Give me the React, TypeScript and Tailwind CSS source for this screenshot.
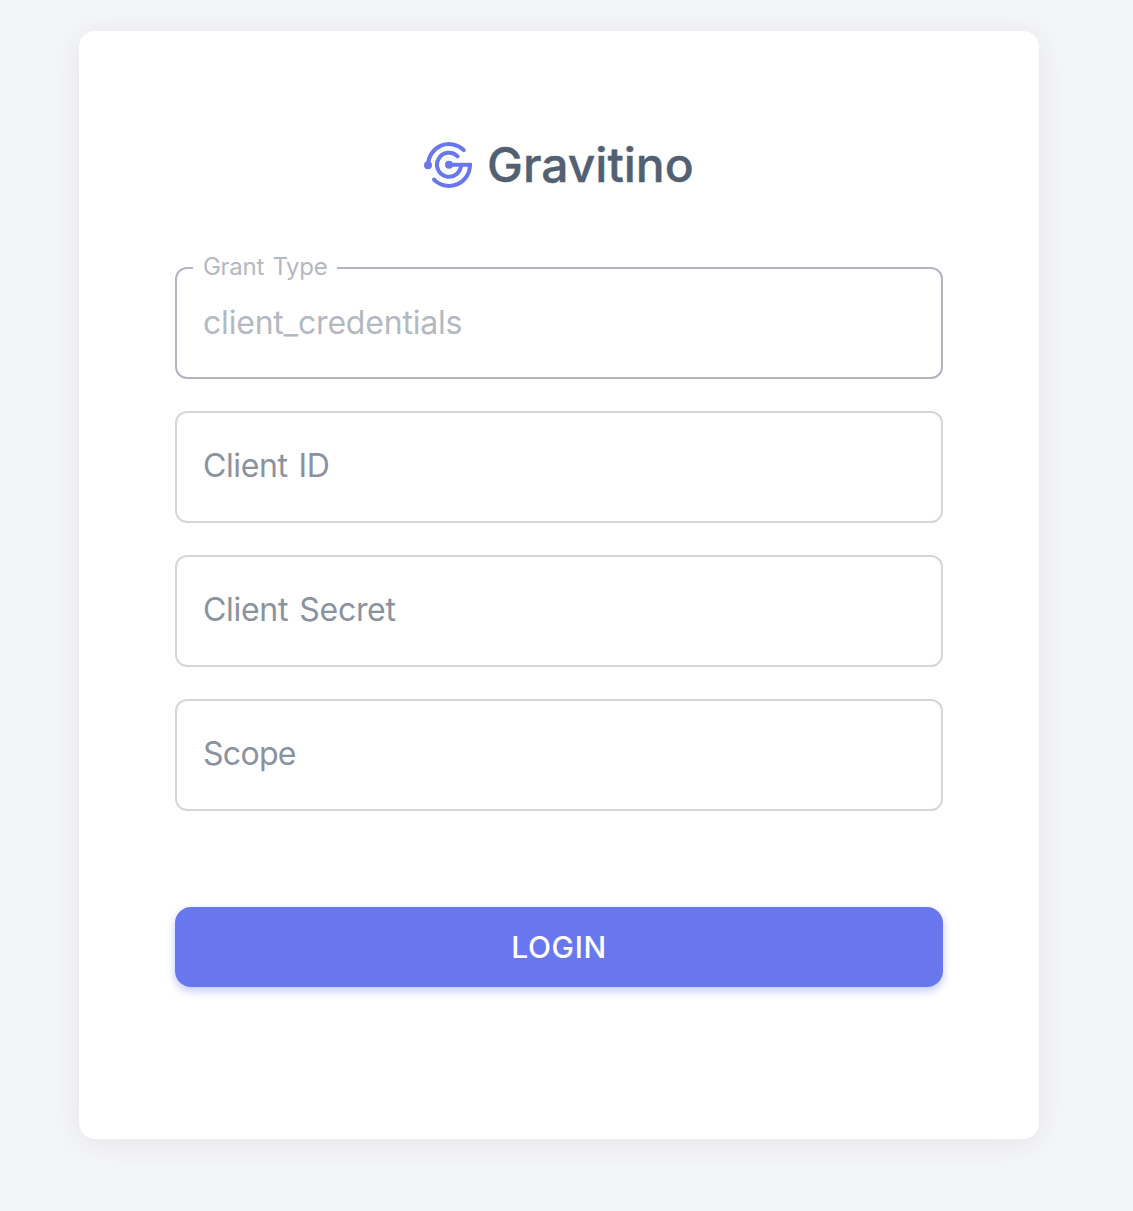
function Logo() {
  return (
    <svg width="48" height="48" viewBox="0 0 48 48" fill="none" stroke="#6877ee" strokeWidth="4" strokeLinecap="round">
      <path d="M39.8 9.2A21 21 0 0 0 4 23.8" />
      <path d="M10 38.6A21 21 0 0 0 46 23.8" strokeLinecap="butt" />
      <path d="M10 38.6h.01" />
      <path d="M33.6 15.4A12 12 0 1 0 37 23.8" />
      <path d="M25 23.8H48" strokeLinecap="butt" />
      <circle cx="25" cy="23.8" r="4" fill="#6877ee" stroke="none" />
      <circle cx="4" cy="24.2" r="4" fill="#6877ee" stroke="none" />
    </svg>
  );
}

function Field({ label, spacing }: { label: string; spacing: string }) {
  return (
    <div className="flex h-28 items-center rounded-xl border-2 border-[#d3d6db] px-[26px] pb-[2px] text-[32px] leading-none text-[#8b929f]">
      <span className={spacing}>{label}</span>
    </div>
  );
}

export default function App() {
  return (
    <main className="h-[1211px] overflow-hidden bg-[#f4f5f7] pl-[79px] pt-[31px] font-['Inter',sans-serif] font-normal">
      <section className="flex h-[1108px] w-[960px] flex-col rounded-2xl bg-white px-24 pt-[110px] shadow-[0_4px_28px_rgba(58,53,90,0.08)]">
        <header className="flex h-12 items-center justify-center gap-[15px]">
          <Logo />
          <h1 className="w-[207px] text-[48px] leading-none font-medium text-[#516072] [-webkit-text-stroke:0.4px_#516072]">
            Gravitino
          </h1>
        </header>
        <form className="mt-[78px] flex flex-col gap-8">
          <div className="relative flex h-28 items-center rounded-xl border-2 border-[#b2b5c0] px-[26px] text-[32px] leading-none text-[#b4b8c1]">
            <span className="absolute -top-4 left-4 w-36 bg-white pl-2.5 text-[24px] leading-7 tracking-[-0.3px] [word-spacing:2px] whitespace-nowrap">
              Grant Type
            </span>
            <span className="tracking-[-0.2px]">client_credentials</span>
          </div>
          <Field label="Client ID" spacing="tracking-[-0.4px] [word-spacing:2.5px]" />
          <Field label="Client Secret" spacing="tracking-[-0.3px] [word-spacing:2.5px]" />
          <Field label="Scope" spacing="tracking-[-0.7px]" />
        </form>
        <button className="mt-24 flex h-20 items-center justify-center rounded-2xl bg-[#6877ee] text-[30px] leading-none font-medium tracking-[0.6px] text-white shadow-[0_4px_8px_rgba(104,119,238,0.4)]">
          LOGIN
        </button>
      </section>
    </main>
  );
}
